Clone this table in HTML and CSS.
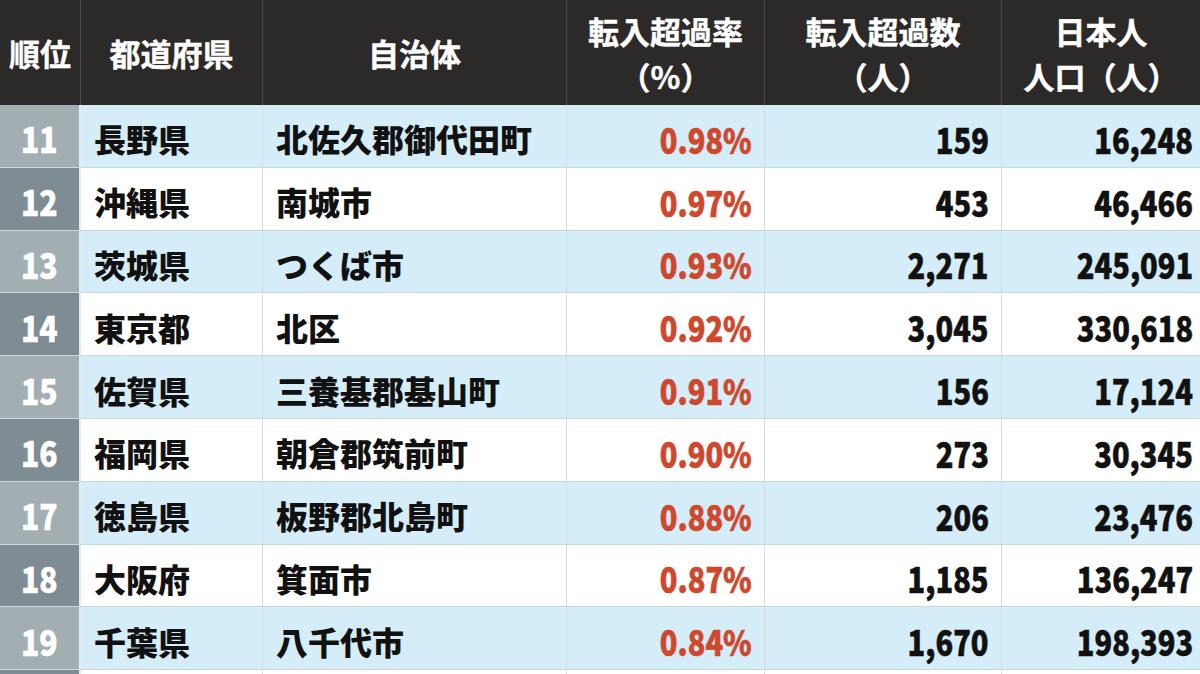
FILE: index.html
```html
<!DOCTYPE html>
<html lang="ja">
<head>
<meta charset="utf-8">
<title>転入超過率ランキング</title>
<link rel="stylesheet" href="styles.css">
</head>
<body>
<div class="table">
  <div class="head">
    <div class="hc">順位</div>
    <div class="hc">都道府県</div>
    <div class="hc">自治体</div>
    <div class="hc two"><span>転入超過率</span><span>（%）</span></div>
    <div class="hc two"><span>転入超過数</span><span>（人）</span></div>
    <div class="hc two"><span>日本人</span><span>人口（人）</span></div>
  </div>
  <div class="row odd"><div class="rank"><span>11</span></div><div class="c txt">長野県</div><div class="c txt">北佐久郡御代田町</div><div class="c num red"><span>0.98%</span></div><div class="c num"><span>159</span></div><div class="c num last"><span>16,248</span></div></div>
  <div class="row even"><div class="rank"><span>12</span></div><div class="c txt">沖縄県</div><div class="c txt">南城市</div><div class="c num red"><span>0.97%</span></div><div class="c num"><span>453</span></div><div class="c num last"><span>46,466</span></div></div>
  <div class="row odd"><div class="rank"><span>13</span></div><div class="c txt">茨城県</div><div class="c txt">つくば市</div><div class="c num red"><span>0.93%</span></div><div class="c num"><span>2,271</span></div><div class="c num last"><span>245,091</span></div></div>
  <div class="row even"><div class="rank"><span>14</span></div><div class="c txt">東京都</div><div class="c txt">北区</div><div class="c num red"><span>0.92%</span></div><div class="c num"><span>3,045</span></div><div class="c num last"><span>330,618</span></div></div>
  <div class="row odd"><div class="rank"><span>15</span></div><div class="c txt">佐賀県</div><div class="c txt">三養基郡基山町</div><div class="c num red"><span>0.91%</span></div><div class="c num"><span>156</span></div><div class="c num last"><span>17,124</span></div></div>
  <div class="row even"><div class="rank"><span>16</span></div><div class="c txt">福岡県</div><div class="c txt">朝倉郡筑前町</div><div class="c num red"><span>0.90%</span></div><div class="c num"><span>273</span></div><div class="c num last"><span>30,345</span></div></div>
  <div class="row odd"><div class="rank"><span>17</span></div><div class="c txt">徳島県</div><div class="c txt">板野郡北島町</div><div class="c num red"><span>0.88%</span></div><div class="c num"><span>206</span></div><div class="c num last"><span>23,476</span></div></div>
  <div class="row even"><div class="rank"><span>18</span></div><div class="c txt">大阪府</div><div class="c txt">箕面市</div><div class="c num red"><span>0.87%</span></div><div class="c num"><span>1,185</span></div><div class="c num last"><span>136,247</span></div></div>
  <div class="row odd"><div class="rank"><span>19</span></div><div class="c txt">千葉県</div><div class="c txt">八千代市</div><div class="c num red"><span>0.84%</span></div><div class="c num"><span>1,670</span></div><div class="c num last"><span>198,393</span></div></div>
  <div class="row even"><div class="rank"></div><div class="c txt"></div><div class="c txt"></div><div class="c num red"></div><div class="c num"></div><div class="c num last"></div></div>
</div>
</body>
</html>
```

FILE: styles.css
```css
html, body {
  margin: 0;
  padding: 0;
  background: #ffffff;
}
body {
  width: 1200px;
  height: 674px;
  overflow: hidden;
  font-family: "Noto Sans CJK JP", "Noto Sans", sans-serif;
}
.table {
  width: 1200px;
}
.head,
.row {
  display: grid;
  grid-template-columns: 81px 182px 304px 198px 237px 198px;
}
.head {
  height: 105px;
  background: #2c2929;
  color: #ffffff;
}
.hc {
  display: flex;
  flex-direction: column;
  align-items: center;
  justify-content: center;
  font-size: 31px;
  font-weight: 700;
  line-height: 45px;
  border-right: 1px solid #4a4646;
  box-sizing: border-box;
  -webkit-text-stroke: 0.4px #ffffff;
}
.hc:last-child {
  border-right: none;
}
.row {
  height: 62.8px;
  box-sizing: border-box;
  border-bottom: 1px solid #c9d7de;
}
.row.odd {
  background: #d4edf8;
}
.row.even {
  background: #ffffff;
}
.rank {
  display: flex;
  align-items: center;
  justify-content: center;
  color: #ffffff;
  font-size: 35px;
  font-weight: 900;
  padding-top: 4px;
  border-right: 2px solid #e4ecef;
  box-sizing: border-box;
}
.rank span {
  display: inline-block;
  transform: scaleX(0.86);
  -webkit-text-stroke: 0.5px #ffffff;
}
.odd .rank {
  background: #a3aeb3;
}
.even .rank {
  background: #7f8c93;
}
.c {
  display: flex;
  align-items: center;
  border-right: 1px solid #d6dcdf;
  box-sizing: border-box;
  color: #111111;
  font-weight: 900;
  padding-top: 5px;
}
.c.last {
  border-right: none;
}
.txt {
  font-size: 32px;
  padding-left: 13px;
}
.num {
  justify-content: flex-end;
  font-size: 35px;
  padding-right: 12px;
}
.num span {
  display: inline-block;
  transform: scaleX(0.83);
  transform-origin: right center;
  -webkit-text-stroke: 0.6px currentColor;
}
.num.last {
  padding-right: 7px;
}
.red {
  color: #cf472c;
}
```
